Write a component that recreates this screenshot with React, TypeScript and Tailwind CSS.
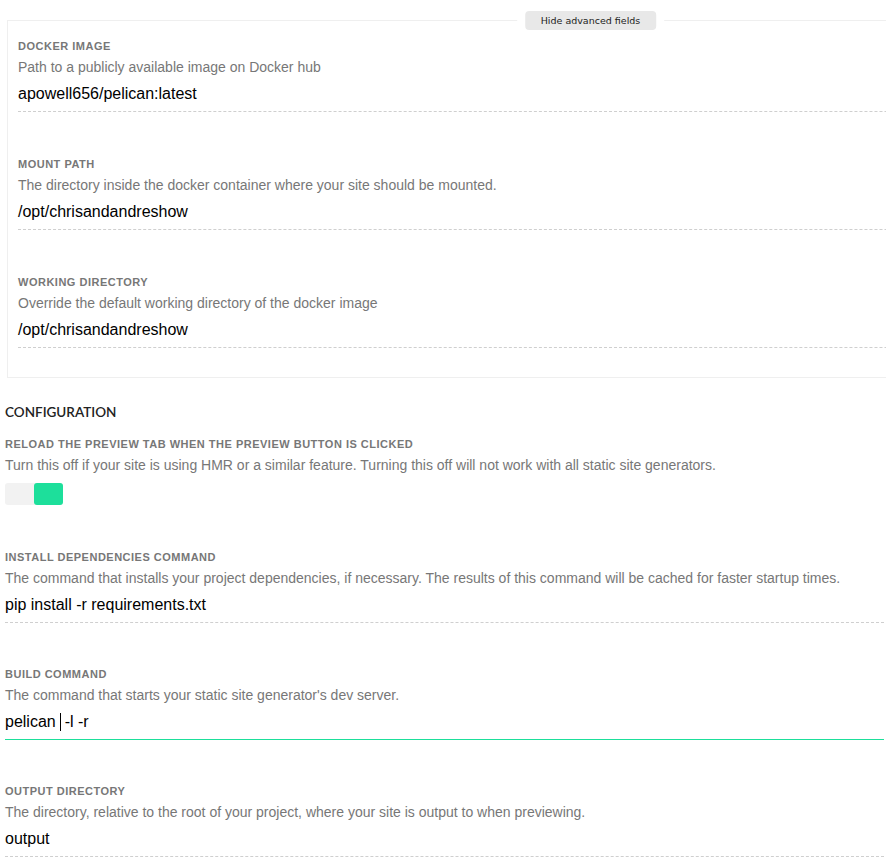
import React from 'react';

interface FieldProps {
  label: string;
  description: string;
  value: React.ReactNode;
  focused?: boolean;
  spacing?: string;
}

function Field({ label, description, value, focused, spacing = 'mb-[44px]' }: FieldProps) {
  return (
    <div className={spacing}>
      <div className="text-[11px] leading-4 font-bold uppercase tracking-[0.5px] text-[#777]">
        {label}
      </div>
      <div className="mt-[3px] text-[14px] leading-5 text-[#777]">{description}</div>
      <div className="pt-[7px] pb-[7px] text-[16px] leading-5 text-black">{value}</div>
      {focused ? (
        <div className="h-px bg-[#1ddf9b]" />
      ) : (
        <div className="border-t border-dashed border-[#cfcfcf]" />
      )}
    </div>
  );
}

export default function App() {
  return (
    <div
      className="w-[886px] h-[859px] overflow-hidden bg-white pt-[20px] pl-[5px] pr-[2px]"
      style={{ fontFamily: '"Liberation Sans", Arial, sans-serif' }}
    >
      {/* Advanced fields panel */}
      <div className="relative ml-[2px] mr-[-290px] border border-[#efefef] pt-[17px] pb-[29px] pl-[10px]">
        <div className="absolute left-1/2 top-[-10px] -translate-x-1/2 flex bg-white px-[8px]">
          <button
            className="h-[19px] px-[16px] rounded-[4px] bg-[#e8e8e8] text-[9.5px] text-[#222] leading-[19px]"
            style={{ fontFamily: '"DejaVu Sans", Verdana, sans-serif' }}
          >
            Hide advanced fields
          </button>
        </div>
        <Field
          label="Docker image"
          description="Path to a publicly available image on Docker hub"
          value="apowell656/pelican:latest"
        />
        <Field
          label="Mount path"
          description="The directory inside the docker container where your site should be mounted."
          value="/opt/chrisandandreshow"
        />
        <Field
          label="Working directory"
          description="Override the default working directory of the docker image"
          value="/opt/chrisandandreshow"
          spacing=""
        />
      </div>

      {/* Configuration */}
      <h2
        className="mt-[26px] text-[13.5px] leading-4 font-semibold uppercase text-[#222]"
        style={{ fontFamily: 'Lato, "Liberation Sans", sans-serif' }}
      >
        Configuration
      </h2>

      <div className="mt-[16px] mb-[44px]">
        <div className="text-[11px] leading-4 font-bold uppercase tracking-[0.5px] text-[#777]">
          Reload the preview tab when the preview button is clicked
        </div>
        <div className="mt-[3px] text-[14px] leading-5 text-[#777]">
          Turn this off if your site is using HMR or a similar feature. Turning this off will not
          work with all static site generators.
        </div>
        <div className="mt-[8px] flex w-[58px] h-[22px] rounded-[3px] bg-[#f2f2f2]">
          <div className="ml-auto w-[29px] h-full rounded-[3px] bg-[#1ddf9b]" />
        </div>
      </div>

      <Field
        label="Install dependencies command"
        description="The command that installs your project dependencies, if necessary. The results of this command will be cached for faster startup times."
        value="pip install -r requirements.txt"
        spacing="mb-[43px]"
      />
      <Field
        label="Build command"
        description="The command that starts your static site generator's dev server."
        value={
          <span>
            pelican
            <span className="inline-block w-px h-[18px] bg-black align-middle mx-[4px] -mt-[2px]" />
            -l -r
          </span>
        }
        focused
        spacing="mb-[43px]"
      />
      <Field
        label="Output directory"
        description="The directory, relative to the root of your project, where your site is output to when previewing."
        value="output"
        spacing=""
      />
    </div>
  );
}
